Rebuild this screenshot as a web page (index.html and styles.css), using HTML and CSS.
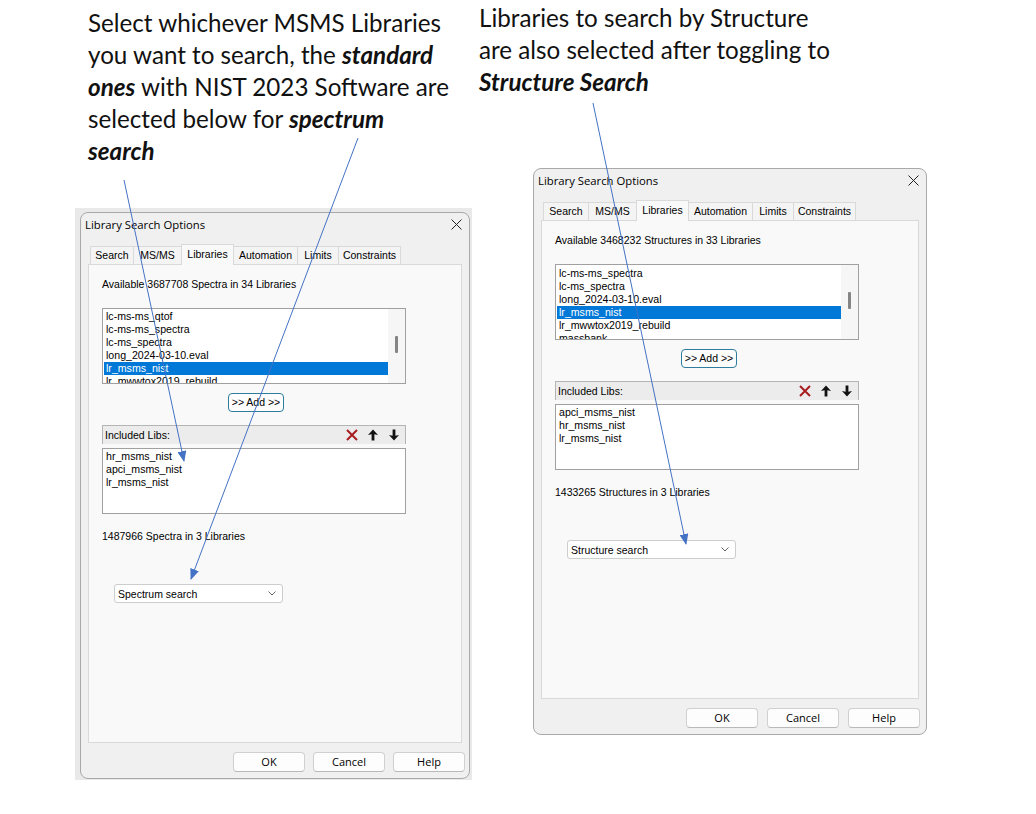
FILE: index.html
```html
<!DOCTYPE html>
<html>
<head>
<meta charset="utf-8">
<title>Library Search Options</title>
<link rel="stylesheet" href="styles.css">
</head>
<body>
<div class="page">
  <div class="col col-left">
    <p class="note note-left">Select whichever MSMS Libraries<br>you want to search, the <span class="em">standard</span><br><span class="em">ones</span> with NIST 2023 Software are<br>selected below for <span class="em">spectrum</span><br><span class="em">search</span></p>
    <div class="shot shot-left">
      <div class="dialog">
        <div class="titlebar">
          <span class="title">Library Search Options</span>
          <svg class="close" width="11" height="11" viewBox="0 0 11 11"><path d="M0.5 0.5L10.5 10.5M10.5 0.5L0.5 10.5" stroke="#222" stroke-width="1" fill="none"/></svg>
        </div>
        <div class="tabs">
          <span class="tab w43">Search</span>
          <span class="tab w48">MS/MS</span>
          <span class="tab active w52">Libraries</span>
          <span class="tab w64">Automation</span>
          <span class="tab w41">Limits</span>
          <span class="tab w62">Constraints</span>
        </div>
        <div class="panel">
          <div class="label">Available 3687708 Spectra in 34 Libraries</div>
          <div class="listbox">
            <div class="items">
              <div class="item">lc-ms-ms_qtof</div>
              <div class="item">lc-ms-ms_spectra</div>
              <div class="item">lc-ms_spectra</div>
              <div class="item">long_2024-03-10.eval</div>
              <div class="item sel">lr_msms_nist</div>
              <div class="item">lr_mwwtox2019_rebuild</div>
            </div>
            <div class="vscroll"><div class="thumb"></div></div>
          </div>
          <div class="add-btn">&gt;&gt; Add &gt;&gt;</div>
          <div class="inc-head">
            <span>Included Libs:</span>
            <span class="icons">
              <svg width="12" height="12" viewBox="0 0 12 12"><path d="M1 1L11 11M11 1L1 11" stroke="#a81c20" stroke-width="2" fill="none"/></svg>
              <svg width="12" height="12" viewBox="0 0 12 12"><path d="M6 0.5L11 6L7.4 5.2L7.4 11.5L4.6 11.5L4.6 5.2L1 6Z" fill="#111"/></svg>
              <svg width="12" height="12" viewBox="0 0 12 12"><path d="M6 11.5L11 6L7.4 6.8L7.4 0.5L4.6 0.5L4.6 6.8L1 6Z" fill="#111"/></svg>
            </span>
          </div>
          <div class="inc-list">
            <div class="item">hr_msms_nist</div>
            <div class="item">apci_msms_nist</div>
            <div class="item">lr_msms_nist</div>
          </div>
          <div class="label count">1487966 Spectra in 3 Libraries</div>
          <div class="combo">
            <span>Spectrum search</span>
            <svg width="8" height="5" viewBox="0 0 8 5"><path d="M0.5 0.5L4 4L7.5 0.5" stroke="#666" fill="none"/></svg>
          </div>
        </div>
        <div class="buttons">
          <span class="btn">OK</span>
          <span class="btn">Cancel</span>
          <span class="btn">Help</span>
        </div>
      </div>
    </div>
  </div>

  <div class="col col-right">
    <p class="note note-right">Libraries to search by Structure<br>are also selected after toggling to<br><span class="em">Structure Search</span></p>
    <div class="shot shot-right">
      <div class="dialog">
        <div class="titlebar">
          <span class="title">Library Search Options</span>
          <svg class="close" width="11" height="11" viewBox="0 0 11 11"><path d="M0.5 0.5L10.5 10.5M10.5 0.5L0.5 10.5" stroke="#222" stroke-width="1" fill="none"/></svg>
        </div>
        <div class="tabs">
          <span class="tab w45">Search</span>
          <span class="tab w48">MS/MS</span>
          <span class="tab active w52">Libraries</span>
          <span class="tab w64">Automation</span>
          <span class="tab w41">Limits</span>
          <span class="tab w62">Constraints</span>
        </div>
        <div class="panel">
          <div class="label">Available 3468232 Structures in 33 Libraries</div>
          <div class="listbox">
            <div class="items items-r">
              <div class="item">lc-ms-ms_spectra</div>
              <div class="item">lc-ms_spectra</div>
              <div class="item">long_2024-03-10.eval</div>
              <div class="item sel">lr_msms_nist</div>
              <div class="item">lr_mwwtox2019_rebuild</div>
              <div class="item">massbank</div>
            </div>
            <div class="vscroll"><div class="thumb"></div></div>
          </div>
          <div class="add-btn">&gt;&gt; Add &gt;&gt;</div>
          <div class="inc-head">
            <span>Included Libs:</span>
            <span class="icons">
              <svg width="12" height="12" viewBox="0 0 12 12"><path d="M1 1L11 11M11 1L1 11" stroke="#a81c20" stroke-width="2" fill="none"/></svg>
              <svg width="12" height="12" viewBox="0 0 12 12"><path d="M6 0.5L11 6L7.4 5.2L7.4 11.5L4.6 11.5L4.6 5.2L1 6Z" fill="#111"/></svg>
              <svg width="12" height="12" viewBox="0 0 12 12"><path d="M6 11.5L11 6L7.4 6.8L7.4 0.5L4.6 0.5L4.6 6.8L1 6Z" fill="#111"/></svg>
            </span>
          </div>
          <div class="inc-list">
            <div class="item">apci_msms_nist</div>
            <div class="item">hr_msms_nist</div>
            <div class="item">lr_msms_nist</div>
          </div>
          <div class="label count">1433265 Structures in 3 Libraries</div>
          <div class="combo">
            <span>Structure search</span>
            <svg width="8" height="5" viewBox="0 0 8 5"><path d="M0.5 0.5L4 4L7.5 0.5" stroke="#666" fill="none"/></svg>
          </div>
        </div>
        <div class="buttons">
          <span class="btn">OK</span>
          <span class="btn">Cancel</span>
          <span class="btn">Help</span>
        </div>
      </div>
    </div>
  </div>

  <svg class="arrows" width="1036" height="814" viewBox="0 0 1036 814">
    <defs>
      <marker id="ah" markerWidth="11" markerHeight="9" refX="10" refY="4.5" orient="auto" markerUnits="userSpaceOnUse">
        <path d="M0 0L11 4.5L0 9Z" fill="#4472c4"/>
      </marker>
    </defs>
    <line x1="124" y1="180" x2="184" y2="461" stroke="#4472c4" stroke-width="1" marker-end="url(#ah)"/>
    <line x1="358" y1="138" x2="191" y2="579" stroke="#4472c4" stroke-width="1" marker-end="url(#ah)"/>
    <line x1="593" y1="103" x2="686" y2="544" stroke="#4472c4" stroke-width="1" marker-end="url(#ah)"/>
  </svg>
</div>
</body>
</html>
```
FILE: styles.css
```css
* { box-sizing: border-box; }
html, body { margin: 0; padding: 0; background: #fff; }

.page {
  position: relative;
  width: 1036px;
  height: 814px;
  display: flex;
  align-items: flex-start;
  overflow: hidden;
  font-family: "Liberation Sans", Arial, sans-serif;
  color: #000;
}

.col { flex: none; }
.col-left { margin-left: 75px; width: 397px; }
.col-right { margin-left: 7px; width: 460px; }

.note {
  margin: 0;
  font-family: Lato, "Open Sans", sans-serif;
  font-size: 24.2px;
  line-height: 32px;
  white-space: nowrap;
  color: #111;
}
.note-left { height: 208px; padding: 7px 0 0 13px; }
.note-right { height: 162px; padding: 2px 0 0 0; }
.em { font-weight: 700; font-style: italic; }

.shot-left {
  width: 397px;
  height: 572px;
  background: #e9e9e9;
  padding: 4px 2px 1px 5px;
}
.shot-right {
  margin-left: 54px;
  width: 395px;
  padding-top: 6px;
}

.dialog {
  width: 390px;
  height: 567px;
  background: #f0f0f0;
  border: 1px solid #a9a9a9;
  border-radius: 8px;
  display: flex;
  flex-direction: column;
}
.shot-right .dialog { width: 394px; }

.titlebar {
  height: 23px;
  display: flex;
  align-items: center;
  justify-content: space-between;
  padding: 0 7px 0 4px;
  font-family: "Open Sans", "Liberation Sans", sans-serif;
  font-size: 11.3px;
}

.tabs {
  display: flex;
  align-items: flex-end;
  height: 20px;
  margin: 8px 0 0 9px;
}
.tab {
  height: 18px;
  border: 1px solid #d9d9d9;
  border-bottom: none;
  background: #f4f4f4;
  font-size: 10.5px;
  line-height: 17px;
  text-align: center;
  margin-right: -1px;
  white-space: nowrap;
}
.tab.active {
  height: 21px;
  margin-bottom: -1px;
  background: #f9f9f9;
  position: relative;
  z-index: 1;
  line-height: 18px;
}
.w41 { width: 42px; }
.w43 { width: 44px; }
.w45 { width: 46px; }
.w48 { width: 49px; }
.w52 { width: 53px; }
.w62 { width: 63px; }
.w64 { width: 65px; }

.panel {
  margin: 0 7px;
  height: 479px;
  border: 1px solid #d9d9d9;
  background: #f9f9f9;
  padding: 12px 0 0 13px;
  display: flex;
  flex-direction: column;
  align-items: flex-start;
}

.label {
  font-size: 10.5px;
  line-height: 14px;
  white-space: nowrap;
}

.listbox {
  margin-top: 17px;
  width: 304px;
  height: 76px;
  border: 1px solid #a0a0a0;
  background: #fff;
  display: flex;
  overflow: hidden;
}
.items {
  flex: 1;
  padding: 1px 0 0 1px;
  overflow: hidden;
}
.items-r { padding-top: 2px; }
.item {
  height: 13px;
  line-height: 13px;
  font-size: 10.6px;
  padding-left: 2px;
  white-space: nowrap;
}
.item.sel { background: #0078d7; color: #fff; }
.vscroll {
  width: 17px;
  background: #f6f6f6;
  flex: none;
}
.thumb {
  margin: 27px 0 0 7px;
  width: 3px;
  height: 17px;
  background: #858585;
  border-radius: 1px;
}

.add-btn {
  margin: 9px 0 0 126px;
  width: 56px;
  height: 19px;
  border: 1px solid #2e7d9c;
  border-radius: 4px;
  background: #fdfdfd;
  font-size: 10.5px;
  line-height: 17px;
  text-align: center;
  white-space: nowrap;
}

.inc-head {
  margin-top: 13px;
  width: 304px;
  height: 19px;
  background: #ececec;
  border: 1px solid #b4b4b4;
  border-bottom: none;
  display: flex;
  align-items: center;
  justify-content: space-between;
  padding: 0 5px 0 2px;
  font-size: 10.5px;
}
.icons { display: flex; gap: 9px; align-items: center; }
.icons svg { display: block; }

.inc-list {
  margin-top: 4px;
  width: 304px;
  height: 66px;
  border: 1px solid #a0a0a0;
  background: #fff;
  padding: 1px 0 0 1px;
}

.count { margin-top: 15px; }

.combo {
  margin: 41px 0 0 12px;
  width: 169px;
  height: 19px;
  border: 1px solid #cdcdcd;
  border-radius: 3px;
  background: #fff;
  display: flex;
  align-items: center;
  justify-content: space-between;
  padding: 0 6px 0 3px;
  font-size: 10.5px;
}
.combo svg { display: block; }

.buttons {
  margin-top: 9px;
  display: flex;
  justify-content: flex-end;
  gap: 8px;
  padding-right: 4px;
}
.shot-right .buttons { padding-right: 6px; gap: 9px; }
.btn {
  width: 72px;
  height: 20px;
  border: 1px solid #d0d0d0;
  border-bottom-color: #b9b9b9;
  border-radius: 4px;
  background: #fdfdfd;
  font-family: "Open Sans", "Liberation Sans", sans-serif;
  font-size: 11px;
  line-height: 18px;
  text-align: center;
}

.arrows {
  position: absolute;
  left: 0;
  top: 0;
  pointer-events: none;
}
```
